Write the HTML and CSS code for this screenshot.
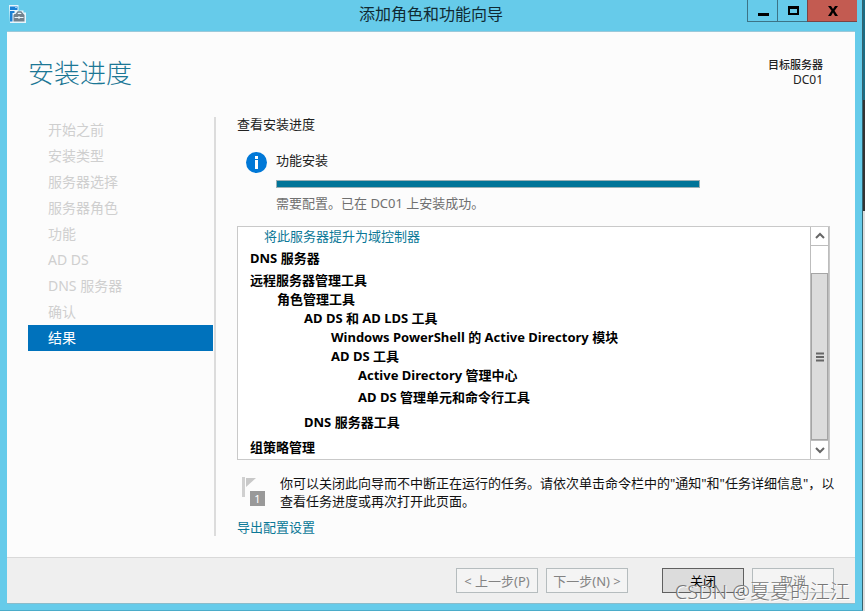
FILE: index.html
```
<!DOCTYPE html>
<html lang="zh-CN">
<head>
    <meta charset="UTF-8">
    <meta name="viewport" content="width=device-width, initial-scale=1.0">
    <title>添加角色和功能向导</title>
    <link rel="stylesheet" href="styles.css">
</head>
<body>
    <div class="window">
        <header class="titlebar">
            <svg class="app-icon" width="18" height="18" viewBox="0 0 18 18" aria-hidden="true">
                <path d="M1 0h9.500v6.500h1v-1h4v2h2.500v10.500h-16z" fill="#e8f5fc"/>
                <path d="M2 1.500h7.500v3.500H2zM2 6h4.500v2H4.500v8.500H2z" fill="#1a80d4"/>
                <path d="M7 2.500h2" stroke="#8fd0f5"/>
                <path d="M8 9.500l2-2.500h3l2 2.500" fill="none" stroke="#71818d" stroke-width="1.300"/>
                <path d="M5.500 10l1-1h9l1 1v6.500h-11z" fill="#71818d"/>
                <path d="M6.500 12.500h3.500M12 12.500h3.500" stroke="#e8f5fc"/>
                <path d="M10 11.500h2v2h-2z" fill="#e8f5fc"/>
            </svg>
            <h1 class="window-title">添加角色和功能向导</h1>
            <div class="window-buttons">
                <button class="window-button" type="button" aria-label="最小化">
                    <svg width="12" height="12" viewBox="0 0 12 12"><path d="M1 8h11v3H1z"/></svg>
                </button>
                <button class="window-button" type="button" aria-label="最大化">
                    <svg width="12" height="12" viewBox="0 0 12 12"><path d="M1 1h11v9H1zM3 4v4h7V4z" fill-rule="evenodd"/></svg>
                </button>
                <button class="window-button close" type="button" aria-label="关闭窗口">
                    <svg width="12" height="12" viewBox="0 0 12 12"><path d="M1 1h3l2 3 2-3h3L7.500 5.700 11 11H8L6 7.500 4 11H1l3.500-5.300z"/></svg>
                </button>
            </div>
        </header>

        <div class="client">
            <div class="page-head">
                <h2 class="page-title">安装进度</h2>
                <p class="target">目标服务器<span class="target-name">DC01</span></p>
            </div>

            <div class="wizard">
                <nav class="steps">
                    <ul>
                        <li>开始之前</li>
                        <li>安装类型</li>
                        <li>服务器选择</li>
                        <li>服务器角色</li>
                        <li>功能</li>
                        <li>AD DS</li>
                        <li>DNS 服务器</li>
                        <li>确认</li>
                        <li class="current" aria-current="step">结果</li>
                    </ul>
                </nav>

                <main class="content">
                    <h3 class="content-title">查看安装进度</h3>

                    <section class="status">
                        <svg class="info-icon" width="21" height="21" viewBox="0 0 21 21" aria-hidden="true">
                            <circle cx="10.500" cy="10.500" r="10.500" fill="#0078d7"/>
                            <path d="M9 4h3v3H9zM9 8h3v9H9z" fill="#fff"/>
                        </svg>
                        <div class="status-body">
                            <label for="install">功能安装</label>
                            <progress id="install" value="100" max="100"></progress>
                            <p class="status-text">需要配置。已在 DC01 上安装成功。</p>
                        </div>
                    </section>

                    <div class="results">
                        <ul class="result-list">
                            <li><a href="#">将此服务器提升为域控制器</a></li>
                            <li class="near">DNS 服务器</li>
                            <li class="near">远程服务器管理工具
                                <ul>
                                    <li>角色管理工具
                                        <ul>
                                            <li>AD DS 和 AD LDS 工具
                                                <ul>
                                                    <li>Windows PowerShell 的 Active Directory 模块</li>
                                                    <li>AD DS 工具
                                                        <ul>
                                                            <li>Active Directory 管理中心</li>
                                                            <li class="near">AD DS 管理单元和命令行工具</li>
                                                        </ul>
                                                    </li>
                                                </ul>
                                            </li>
                                            <li class="roomy">DNS 服务器工具</li>
                                        </ul>
                                    </li>
                                </ul>
                            </li>
                            <li class="roomy">组策略管理</li>
                        </ul>
                        <div class="scrollbar">
                            <button class="scroll-button" type="button" aria-label="向上滚动">
                                <svg width="10" height="8" viewBox="0 0 10 8"><path d="M1 6l4-4 4 4"/></svg>
                            </button>
                            <div class="scroll-track">
                                <div class="scroll-thumb">
                                    <svg width="8" height="10" viewBox="0 0 8 10"><path d="M0 1.500h8M0 5h8M0 8.500h8"/></svg>
                                </div>
                            </div>
                            <button class="scroll-button" type="button" aria-label="向下滚动">
                                <svg width="10" height="8" viewBox="0 0 10 8"><path d="M1 2l4 4 4-4"/></svg>
                            </button>
                        </div>
                    </div>

                    <div class="note">
                        <div class="flag">
                            <svg width="23" height="28" viewBox="0 0 23 28" aria-hidden="true">
                                <path d="M0 0h3v20H0z" fill="#d0d0d0"/>
                                <path d="M4 1h10L4 10z" fill="#c8c8c8"/>
                            </svg>
                            <span class="flag-count">1</span>
                        </div>
                        <p>你可以关闭此向导而不中断正在运行的任务。请依次单击命令栏中的"通知"和"任务详细信息"，以查看任务进度或再次打开此页面。</p>
                    </div>
                    <a class="export" href="#">导出配置设置</a>
                </main>
            </div>

            <footer class="actions">
                <button type="button" disabled>&lt; 上一步(P)</button>
                <button type="button" disabled>下一步(N) &gt;</button>
                <button class="primary" type="button">关闭</button>
                <button type="button" disabled>取消</button>
            </footer>
        </div>
    </div>
    <div class="desktop-edge"></div>
    <div class="watermark">CSDN @夏夏的江江</div>
</body>
</html>
```
FILE: styles.css
```
* {
    box-sizing: border-box;
}
body {
    position: relative;
    display: flex;
    min-height: 100vh;
    margin: 0;
    font-family: "Noto Sans", "Noto Sans CJK SC", sans-serif;
    font-size: 13px;
    line-height: 18px;
    color: #222;
}
h1, h2, h3, p, ul {
    margin: 0;
    padding: 0;
    font-weight: normal;
}
ul {
    list-style: none;
}
button {
    font: inherit;
    padding: 0;
}
a {
    color: #0b7897;
    text-decoration: none;
}

/* Window frame */
.window {
    flex: 1;
    display: flex;
    flex-direction: column;
    padding: 0 7px 6px;
    background-color: #66cbea;
    border-right: 1px solid #34636f;
    border-bottom: 1px solid #4bacc9;
}
.desktop-edge {
    width: 2px;
    background: linear-gradient(#1b6d85 0 100px, #333 100px 211px, #ddd 211px);
}
.titlebar {
    display: grid;
    grid-template-columns: 110px 1fr 110px;
    height: 31px;
}
.app-icon {
    margin: 5px 0 0 1px;
}
.window-title {
    font-size: 16px;
    line-height: 28px;
    text-align: center;
    color: #102a33;
}
.window-buttons {
    display: flex;
    justify-content: flex-end;
    height: 22px;
    margin-right: -2px;
}
.window-button {
    display: flex;
    align-items: center;
    justify-content: center;
    width: 30px;
    background-color: transparent;
    border: 1px solid #3c7386;
    border-width: 0 0 1px 1px;
}
.window-button.close {
    width: 50px;
    background-color: #c35b51;
    border-color: #7c4343;
}

/* Wizard page */
.client {
    flex: 1;
    display: flex;
    flex-direction: column;
    background-color: #fcfcfc;
    border-top: 1px solid #9bc9da;
    border-bottom: 1px solid #8abccb;
}
.page-head {
    display: flex;
    justify-content: space-between;
    height: 85px;
    padding: 21px 32px 0 21px;
}
.page-title {
    font-size: 26px;
    font-weight: 300;
    line-height: 40px;
    color: #1b7795;
}
.target {
    padding-top: 4px;
    font-size: 11px;
    font-weight: 500;
    line-height: 15px;
    text-align: right;
}
.target-name {
    display: block;
    font-size: 12px;
    font-weight: normal;
}
.wizard {
    flex: 1;
    display: flex;
    padding: 0 17px 21px 21px;
}
.steps {
    width: 188px;
    border-right: 2px solid #dcdcdc;
    font-size: 14px;
    line-height: 26px;
    color: #cfcfcf;
}
.steps li {
    margin-right: 1px;
    padding-left: 20px;
}
.steps .current {
    background-color: #0072bc;
    color: #fff;
}
.content {
    flex: 1;
    padding-left: 21px;
}
.content-title {
    font-size: 13px;
    line-height: 15px;
}
.status {
    display: flex;
    gap: 9px;
    margin: 19px 4px 14px 9px;
}
.info-icon {
    margin-top: 1px;
}
.status-body {
    flex: 1;
}
label {
    display: block;
}
progress {
    display: block;
    width: 76%;
    height: 8px;
    margin: 11px 0 6px;
    appearance: none;
    border: 1px solid #9cb0b5;
}
progress::-webkit-progress-bar {
    background-color: #e6e6e6;
}
progress::-webkit-progress-value {
    background-color: #007498;
}
.status-text {
    color: #707070;
}

/* Result tree with its scroll bar */
.results {
    display: flex;
    margin-right: 8px;
    background-color: #fff;
    border: 1px solid #c9c9c9;
}
.result-list {
    flex: 1;
    padding: 0 0 2px 12px;
    font-weight: bold;
    line-height: 19px;
    color: #000;
}
.result-list ul {
    padding-left: 27px;
    font-weight: bold;
}
.result-list a {
    padding-left: 14px;
    font-weight: normal;
    color: #0b7897;
}
.near {
    margin-top: 3px;
}
.roomy {
    margin-top: 6px;
}
.scrollbar {
    display: flex;
    flex-direction: column;
    width: 19px;
    border: 1px solid #bdbdbd;
    border-width: 0 1px;
}
.scroll-button {
    display: flex;
    align-items: center;
    justify-content: center;
    height: 18px;
    background-color: #fff;
    border: 0;
}
.scrollbar path {
    fill: none;
    stroke: #666;
    stroke-width: 2;
}
.scroll-track {
    flex: 1;
    display: flex;
    align-items: flex-end;
    border: 1px solid #bdbdbd;
    border-width: 1px 0;
}
.scroll-thumb {
    display: flex;
    align-items: center;
    justify-content: center;
    width: 100%;
    height: 86%;
    background-color: #dcdcdc;
    border: 1px solid #a5a5a5;
}

.note {
    display: flex;
    gap: 15px;
    margin: 14px 0 8px;
    padding-left: 5px;
    color: #111;
}
.flag {
    position: relative;
    padding-top: 3px;
}
.flag svg {
    display: block;
}
.flag-count {
    position: absolute;
    right: 0;
    bottom: 4px;
    width: 15px;
    background-color: #999;
    color: #fff;
    font-size: 11px;
    line-height: 15px;
    text-align: center;
}
.export {
    display: block;
}

.actions {
    display: flex;
    justify-content: flex-end;
    gap: 8px;
    padding: 10px 21px;
    background-color: #efefef;
    border-top: 1px solid #d9d9d9;
}
.actions button {
    width: 82px;
    height: 25px;
    background-color: #f4f4f4;
    border: 1px solid #b5bcbe;
    color: #838383;
}
.actions .primary {
    margin-left: 26px;
    background-color: #dcdcdc;
    border-color: #606060;
    color: #000;
}

/* Site mark, lies over the buttons */
.watermark {
    position: absolute;
    right: 15px;
    bottom: 6px;
    font-size: 20px;
    font-weight: 300;
    line-height: 26px;
    color: #777;
    text-shadow: 1px 1px 0 #fff;
}
```
